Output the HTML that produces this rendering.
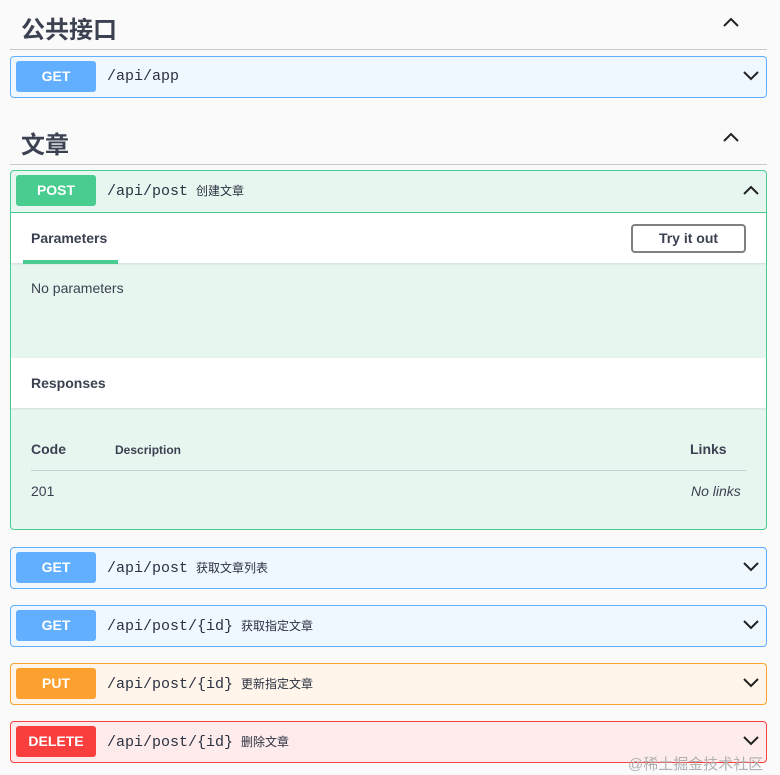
<!DOCTYPE html>
<html><head><meta charset="utf-8"><style>
body{margin:0;width:780px;height:775px;background:#fafafa;position:relative;overflow:hidden;font-family:"Liberation Sans","Noto Sans CJK SC",sans-serif;color:#3b4151}
.a{position:absolute}
.h{font-size:24px;font-weight:bold;left:21px}
.line{left:10px;width:757px;height:1px;background:#c8c8c8}
.op{left:10px;width:755px;border:1px solid;border-radius:4px;box-sizing:content-box}
.badge{position:absolute;left:5px;top:4px;width:80px;height:31px;border-radius:3px;color:#fff;font-weight:bold;font-size:14px;text-align:center;line-height:31px}
.path{position:absolute;left:96px;top:0;line-height:40px;font-family:"Liberation Mono","Noto Sans CJK SC",monospace;font-size:15px;font-weight:normal;color:#2b3141}
.path span{font-family:"Liberation Sans","Noto Sans CJK SC",sans-serif;font-weight:normal;font-size:12px;margin-left:8px}
.chev{position:absolute;right:6px;top:12px}
</style></head><body>
<div class="a h" style="top:10px">公共接口</div>
<svg class="a" style="left:722px;top:16px" width="18" height="12"><path d="M2 10 L9 3 L16 10" fill="none" stroke="#222" stroke-width="2"/></svg>
<div class="a line" style="top:49px"></div>
<div class="a op" style="top:56px;height:40px;border-color:#61affe;background:#eff7ff"><div class="badge" style="background:#61affe">GET</div><div class="path">/api/app</div><svg class="chev" width="18" height="14"><path d="M2 3 L9 10 L16 3" fill="none" stroke="#222" stroke-width="2"/></svg></div>

<div class="a h" style="top:125px">文章</div>
<svg class="a" style="left:722px;top:131px" width="18" height="12"><path d="M2 10 L9 3 L16 10" fill="none" stroke="#222" stroke-width="2"/></svg>
<div class="a line" style="top:164px"></div>

<div class="a op" style="top:170px;height:358px;border-color:#49cc90;background:#e8f6f0">
<div class="badge" style="background:#49cc90">POST</div><div class="path">/api/post<span>创建文章</span></div>
<svg class="chev" width="18" height="14"><path d="M2 11 L9 4 L16 11" fill="none" stroke="#222" stroke-width="2"/></svg>
<div class="a" style="left:0;top:41px;width:755px;height:1px;background:#49cc90"></div>
<div class="a" style="left:0;top:42px;width:755px;height:50px;background:#fff;box-shadow:0 1px 2px rgba(0,0,0,.1)"></div>
<div class="a" style="left:20px;top:59px;font-size:14px;font-weight:bold">Parameters</div>
<div class="a" style="left:12px;top:89px;width:95px;height:4px;background:#49cc90"></div>
<div class="a" style="left:620px;top:53px;width:111px;height:25px;border:2px solid #808080;border-radius:4px;background:#fff;text-align:center;line-height:25px;font-size:14px;font-weight:bold">Try it out</div>
<div class="a" style="left:20px;top:109px;font-size:14px">No parameters</div>
<div class="a" style="left:0;top:187px;width:755px;height:50px;background:#fff;box-shadow:0 1px 2px rgba(0,0,0,.1)"></div>
<div class="a" style="left:20px;top:204px;font-size:14px;font-weight:bold">Responses</div>
<div class="a" style="left:20px;top:270px;font-size:14px;font-weight:bold">Code</div>
<div class="a" style="left:104px;top:272px;font-size:12px;font-weight:bold">Description</div>
<div class="a" style="left:679px;top:270px;font-size:14px;font-weight:bold">Links</div>
<div class="a" style="left:20px;top:299px;width:715px;height:1px;background:#c8cdd0"></div>
<div class="a" style="left:20px;top:312px;font-size:14px">201</div>
<div class="a" style="left:680px;top:312px;font-size:14px;font-style:italic">No links</div>
</div>

<div class="a op" style="top:547px;height:40px;border-color:#61affe;background:#eff7ff"><div class="badge" style="background:#61affe">GET</div><div class="path">/api/post<span>获取文章列表</span></div><svg class="chev" width="18" height="14"><path d="M2 3 L9 10 L16 3" fill="none" stroke="#222" stroke-width="2"/></svg></div>
<div class="a op" style="top:605px;height:40px;border-color:#61affe;background:#eff7ff"><div class="badge" style="background:#61affe">GET</div><div class="path">/api/post/{id}<span>获取指定文章</span></div><svg class="chev" width="18" height="14"><path d="M2 3 L9 10 L16 3" fill="none" stroke="#222" stroke-width="2"/></svg></div>
<div class="a op" style="top:663px;height:40px;border-color:#fca130;background:#fff5ea"><div class="badge" style="background:#fca130">PUT</div><div class="path">/api/post/{id}<span>更新指定文章</span></div><svg class="chev" width="18" height="14"><path d="M2 3 L9 10 L16 3" fill="none" stroke="#222" stroke-width="2"/></svg></div>
<div class="a op" style="top:721px;height:40px;border-color:#f93e3e;background:#feebeb"><div class="badge" style="background:#f93e3e">DELETE</div><div class="path">/api/post/{id}<span>删除文章</span></div><svg class="chev" width="18" height="14"><path d="M2 3 L9 10 L16 3" fill="none" stroke="#222" stroke-width="2"/></svg></div>
<div class="a" style="left:628px;top:753px;font-size:15px;color:#b0b0b0">@稀土掘金技术社区</div>
</body></html>
